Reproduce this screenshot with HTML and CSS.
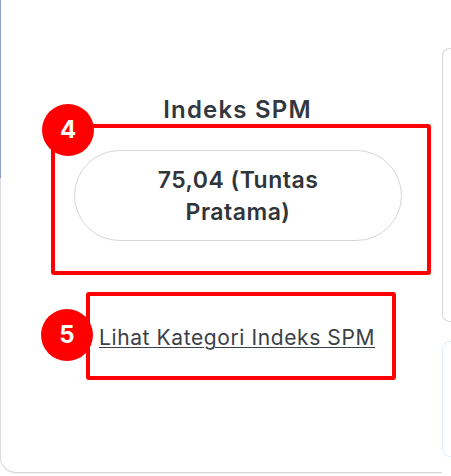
FILE: index.html
```html
<!DOCTYPE html>
<html lang="id">
<head>
<meta charset="utf-8">
<link rel="stylesheet" href="styles.css">
</head>
<body>
<div class="page">
  <section class="card">
    <div class="card-body">
      <h2 class="title">Indeks SPM</h2>
      <div class="mark mark-4">
        <span class="badge badge-4">4</span>
        <div class="pill"><span class="pill-text">75,04 (Tuntas Pratama)</span></div>
      </div>
      <div class="mark mark-5">
        <span class="badge badge-5">5</span>
        <a class="link" href="#">Lihat Kategori Indeks SPM</a>
      </div>
    </div>
  </section>
  <aside class="side">
    <div class="side-card"></div>
    <div class="side-card side-card-blue"></div>
  </aside>
</div>
</body>
</html>
```
FILE: styles.css
```css
* { box-sizing: border-box; }
html, body {
  margin: 0;
  padding: 0;
  background: #ffffff;
  font-family: Inter, "Noto Sans", sans-serif;
  color: #30343b;
  overflow: hidden;
}
.page {
  display: flex;
  width: 451px;
  height: 476px;
}
.card {
  position: relative;
  width: 442px;
  height: 473px;
  flex: none;
  border-left: 1px solid #dadbe3;
  border-bottom: 1px solid #d7d8df;
  border-bottom-left-radius: 16px;
  box-shadow: 0 1px 1px rgba(0,0,0,0.06);
  background: #fff;
}
.card::before {
  content: "";
  position: absolute;
  left: -1px;
  top: 0;
  width: 1px;
  height: 178px;
  background: #8d9fc6;
}
.card-body {
  display: flex;
  flex-direction: column;
  align-items: center;
  padding: 96px 0 0 39px;
}
.title {
  margin: 0 7px 0 0;
  font-size: 24px;
  line-height: 28px;
  font-weight: 600;
  letter-spacing: 1.2px;
  color: #333840;
}
.mark {
  position: relative;
  border: 4px solid #ff0000;
  border-radius: 3px;
}
.mark-4 {
  width: 380px;
  height: 151px;
  padding: 22px 25px 30px 19px;
}
.mark-5 {
  width: 310px;
  height: 88px;
  margin-top: 17px;
  padding: 30px 6px 0 9px;
}
.badge {
  position: absolute;
  width: 52px;
  height: 52px;
  border-radius: 50%;
  background: #ff0000;
  color: #fff;
  font-weight: 700;
  font-size: 24px;
  line-height: 52px;
  text-align: center;
}
.badge-4 { left: -13px; top: -24px; }
.badge-5 { left: -49px; top: 13px; }
.pill {
  display: flex;
  justify-content: center;
  width: 328px;
  height: 91px;
  padding: 13px 0 12px;
  border: 1px solid #d6d6d8;
  border-radius: 46px;
  text-align: center;
}
.pill-text {
  max-width: 200px;
  font-size: 23px;
  line-height: 32px;
  font-weight: 600;
  letter-spacing: 0.5px;
  color: #30343b;
}
.link {
  display: block;
  font-size: 21px;
  line-height: 24px;
  letter-spacing: 0.6px;
  color: #3c4048;
  text-decoration: underline;
  text-underline-offset: 2px;
  text-decoration-thickness: 1px;
  white-space: nowrap;
}
.side {
  display: flex;
  flex-direction: column;
  gap: 19px;
  padding-top: 48px;
  flex: 1;
}
.side-card {
  height: 274px;
  border: 1px solid #d9d9dc;
  border-right: none;
  border-radius: 8px 0 0 8px;
}
.side-card-blue {
  height: 116px;
  border-color: #e4edfb;
}
```
